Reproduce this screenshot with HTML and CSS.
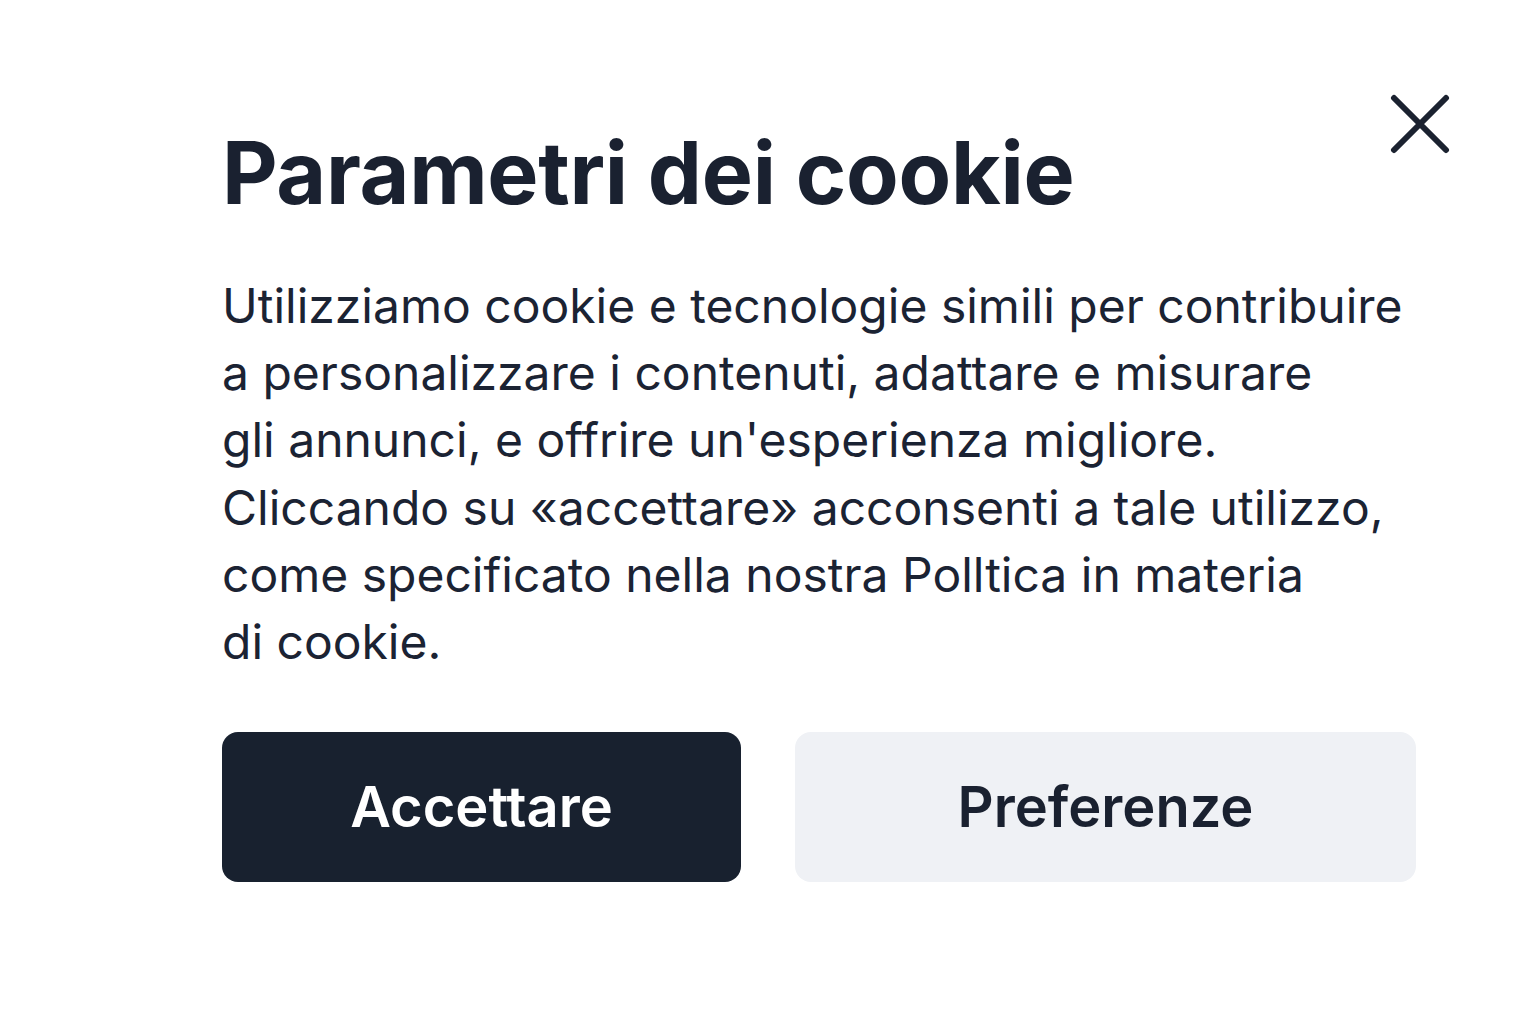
FILE: index.html
```html
<!DOCTYPE html>
<html lang="it">
<head>
<meta charset="utf-8">
<title>Parametri dei cookie</title>
<link rel="stylesheet" href="styles.css">
</head>
<body>
<div class="dialog">
  <button class="close" aria-label="Chiudi">
    <svg width="60" height="60" viewBox="0 0 60 60" fill="none" stroke="#1b2230" stroke-width="6" stroke-linecap="round"><path d="M4 4 L56 56 M56 4 L4 56"/></svg>
  </button>
  <h1 class="title">Parametri dei cookie</h1>
  <p class="text">Utilizziamo cookie e tecnologie simili per contribuire<br>a personalizzare i contenuti, adattare e misurare<br>gli annunci, e offrire un'esperienza migliore.<br>Cliccando su «accettare» acconsenti a tale utilizzo,<br>come specificato nella nostra Polltica in materia<br>di cookie.</p>
  <div class="actions">
    <button class="btn btn-primary">Accettare</button>
    <button class="btn btn-secondary">Preferenze</button>
  </div>
</div>
</body>
</html>
```

FILE: styles.css
```css
html, body {
  margin: 0;
  padding: 0;
  background: #ffffff;
}
body {
  font-family: Inter, "Noto Sans", sans-serif;
  color: #1b2230;
}
.dialog {
  position: relative;
  width: 1536px;
  height: 1024px;
  box-sizing: border-box;
  padding: 118px 0 0 222px;
}
.close {
  position: absolute;
  left: 1390px;
  top: 94px;
  width: 60px;
  height: 60px;
  padding: 0;
  border: 0;
  background: none;
  cursor: pointer;
}
.close svg { display: block; }
.title {
  margin: 0;
  font-size: 86px;
  line-height: 110px;
  font-weight: 700;
  letter-spacing: -0.3px;
  color: #1a2130;
}
.text {
  margin: 44px 0 0 0;
  font-size: 48px;
  line-height: 67.2px;
  font-weight: 400;
  color: #1b2333;
}
.actions {
  display: flex;
  gap: 54px;
  margin-top: 57px;
}
.btn {
  height: 150px;
  border: 0;
  border-radius: 16px;
  font-family: Inter, "Noto Sans", sans-serif;
  font-size: 56px;
  font-weight: 600;
  cursor: pointer;
}
.btn-primary {
  width: 519px;
  background: #18212f;
  color: #ffffff;
}
.btn-secondary {
  width: 621px;
  background: #eff1f5;
  color: #1a2130;
}
```
